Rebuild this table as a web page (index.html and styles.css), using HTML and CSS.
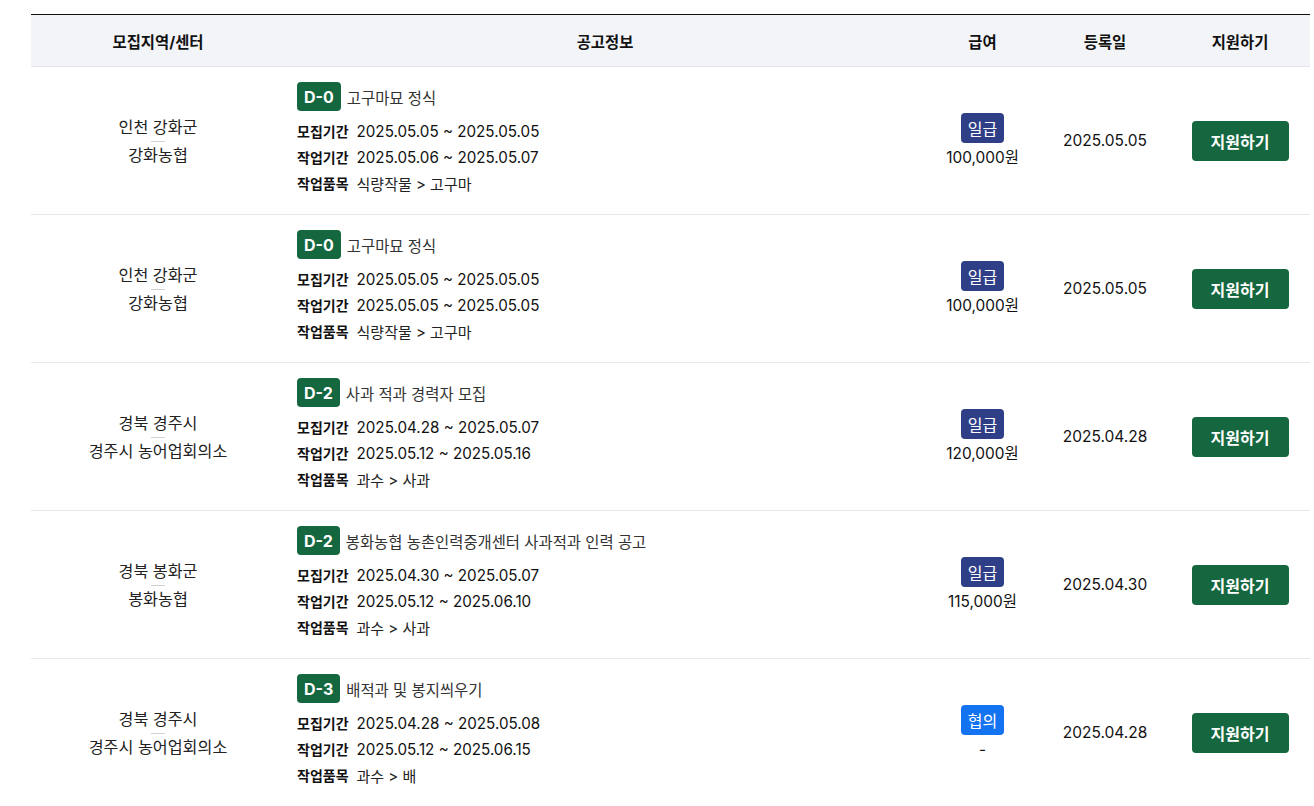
FILE: index.html
```html
<!DOCTYPE html>
<html lang="ko">
<head>
<meta charset="utf-8">
<link rel="stylesheet" href="styles.css">
</head>
<body>
<div class="wrap">
<table class="jobs">
  <colgroup>
    <col class="c-region"><col class="c-info"><col class="c-pay"><col class="c-date"><col class="c-apply">
  </colgroup>
  <thead>
    <tr><th>모집지역/센터</th><th>공고정보</th><th>급여</th><th>등록일</th><th>지원하기</th></tr>
  </thead>
  <tbody>
    <tr>
      <td class="region"><div class="r1">인천 강화군</div><div class="sep"></div><div class="r2">강화농협</div></td>
      <td class="info">
        <div class="title"><span class="dday">D-0</span><span class="ttl">고구마묘 정식</span></div>
        <div class="line"><span class="lb">모집기간</span><span class="val">2025.05.05 ~ 2025.05.05</span></div>
        <div class="line"><span class="lb">작업기간</span><span class="val">2025.05.06 ~ 2025.05.07</span></div>
        <div class="line"><span class="lb">작업품목</span><span class="val item">식량작물 &gt; 고구마</span></div>
      </td>
      <td class="pay"><span class="ptype daily">일급</span><div class="amt">100,000원</div></td>
      <td class="date">2025.05.05</td>
      <td class="apply"><button class="btn">지원하기</button></td>
    </tr>
    <tr>
      <td class="region"><div class="r1">인천 강화군</div><div class="sep"></div><div class="r2">강화농협</div></td>
      <td class="info">
        <div class="title"><span class="dday">D-0</span><span class="ttl">고구마묘 정식</span></div>
        <div class="line"><span class="lb">모집기간</span><span class="val">2025.05.05 ~ 2025.05.05</span></div>
        <div class="line"><span class="lb">작업기간</span><span class="val">2025.05.05 ~ 2025.05.05</span></div>
        <div class="line"><span class="lb">작업품목</span><span class="val item">식량작물 &gt; 고구마</span></div>
      </td>
      <td class="pay"><span class="ptype daily">일급</span><div class="amt">100,000원</div></td>
      <td class="date">2025.05.05</td>
      <td class="apply"><button class="btn">지원하기</button></td>
    </tr>
    <tr>
      <td class="region"><div class="r1">경북 경주시</div><div class="sep"></div><div class="r2">경주시 농어업회의소</div></td>
      <td class="info">
        <div class="title"><span class="dday">D-2</span><span class="ttl">사과 적과 경력자 모집</span></div>
        <div class="line"><span class="lb">모집기간</span><span class="val">2025.04.28 ~ 2025.05.07</span></div>
        <div class="line"><span class="lb">작업기간</span><span class="val">2025.05.12 ~ 2025.05.16</span></div>
        <div class="line"><span class="lb">작업품목</span><span class="val item">과수 &gt; 사과</span></div>
      </td>
      <td class="pay"><span class="ptype daily">일급</span><div class="amt">120,000원</div></td>
      <td class="date">2025.04.28</td>
      <td class="apply"><button class="btn">지원하기</button></td>
    </tr>
    <tr>
      <td class="region"><div class="r1">경북 봉화군</div><div class="sep"></div><div class="r2">봉화농협</div></td>
      <td class="info">
        <div class="title"><span class="dday">D-2</span><span class="ttl">봉화농협 농촌인력중개센터 사과적과 인력 공고</span></div>
        <div class="line"><span class="lb">모집기간</span><span class="val">2025.04.30 ~ 2025.05.07</span></div>
        <div class="line"><span class="lb">작업기간</span><span class="val">2025.05.12 ~ 2025.06.10</span></div>
        <div class="line"><span class="lb">작업품목</span><span class="val item">과수 &gt; 사과</span></div>
      </td>
      <td class="pay"><span class="ptype daily">일급</span><div class="amt">115,000원</div></td>
      <td class="date">2025.04.30</td>
      <td class="apply"><button class="btn">지원하기</button></td>
    </tr>
    <tr>
      <td class="region"><div class="r1">경북 경주시</div><div class="sep"></div><div class="r2">경주시 농어업회의소</div></td>
      <td class="info">
        <div class="title"><span class="dday">D-3</span><span class="ttl">배적과 및 봉지씌우기</span></div>
        <div class="line"><span class="lb">모집기간</span><span class="val">2025.04.28 ~ 2025.05.08</span></div>
        <div class="line"><span class="lb">작업기간</span><span class="val">2025.05.12 ~ 2025.06.15</span></div>
        <div class="line"><span class="lb">작업품목</span><span class="val item">과수 &gt; 배</span></div>
      </td>
      <td class="pay"><span class="ptype nego">협의</span><div class="amt">-</div></td>
      <td class="date">2025.04.28</td>
      <td class="apply"><button class="btn">지원하기</button></td>
    </tr>
  </tbody>
</table>
</div>
</body>
</html>
```

FILE: styles.css
```css
html, body {
  margin: 0;
  padding: 0;
  background: #fff;
}
body {
  font-family: Inter, "Noto Sans CJK KR", sans-serif;
  color: #111;
  overflow: hidden;
}
.wrap {
  padding: 14px 0 0 31px;
}
.jobs {
  width: 1279px;
  border-collapse: collapse;
  table-layout: fixed;
  border-top: 1px solid #111;
}
.c-region { width: 254px; }
.c-info { width: 640px; }
.c-pay { width: 115px; }
.c-date { width: 130px; }
.c-apply { width: 140px; }

.jobs thead th {
  background: #f3f4f8;
  height: 51px;
  padding: 0;
  font-size: 15.4px;
  font-weight: 700;
  color: #111;
  text-align: center;
  border-bottom: 1px solid #e3e5ee;
}
.jobs tbody td {
  border-bottom: 1px solid #e6e7ee;
  text-align: center;
  vertical-align: middle;
  padding: 0;
}
.jobs tbody tr {
  height: 148px;
}
.region {
  font-size: 16.2px;
  color: #222;
}
.r1, .r2 {
  line-height: 22px;
}
.sep {
  width: 14px;
  height: 1px;
  background: #cfd1d6;
  margin: 3px auto 2px;
}
.info {
  text-align: left !important;
  padding: 15px 12px 18px !important;
}
.title {
  display: flex;
  align-items: center;
  gap: 6px;
  margin-bottom: 7px;
}
.dday {
  display: inline-flex;
  align-items: center;
  justify-content: center;
  height: 29px;
  padding: 0 7px;
  min-width: 29px;
  box-sizing: border-box;
  background: #15673f;
  color: #fff;
  font-weight: 700;
  font-size: 16px;
  border-radius: 4px;
}
.ttl {
  font-size: 15.4px;
  color: #333;
}
.line {
  display: flex;
  align-items: center;
  height: 26px;
  gap: 8px;
}
.lb {
  font-size: 14px;
  font-weight: 700;
  color: #111;
}
.val {
  font-size: 15.2px;
  color: #111;
}
.val.item {
  font-size: 15px;
  color: #222;
}
.pay {
  font-size: 15.4px;
}
.ptype {
  display: inline-flex;
  align-items: center;
  justify-content: center;
  height: 30px;
  padding: 0 7px;
  border-radius: 4px;
  color: #fff;
  font-size: 16px;
}
.ptype.daily { background: #2f3f87; }
.ptype.nego { background: #1473f0; }
.amt {
  margin-top: 4px;
  line-height: 22px;
  color: #111;
}
.date {
  font-size: 15.5px;
  color: #111;
}
.btn {
  width: 97px;
  height: 40px;
  border: 0;
  border-radius: 4px;
  background: #15673f;
  color: #fff;
  font-family: inherit;
  font-size: 16px;
  font-weight: 700;
  cursor: pointer;
}
```
